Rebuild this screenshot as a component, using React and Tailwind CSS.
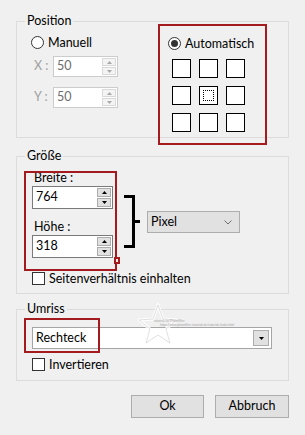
import React from "react";

const font = { fontFamily: '"Segoe UI", Lato, "Noto Sans", "Liberation Sans", sans-serif' };

function Arrow({ up, color }) {
  return (
    <svg width="5" height="3" viewBox="0 0 5 3">
      <path d={up ? "M0 3 L2.5 0 L5 3 Z" : "M0 0 L5 0 L2.5 3 Z"} fill={color} />
    </svg>
  );
}

function SpinBox({ value, width, height, disabled }) {
  return (
    <div
      className={`flex items-stretch bg-white border ${
        disabled ? "border-[#cccccc]" : "border-[#7a7a7a]"
      }`}
      style={{ width, height }}
    >
      <div
        className={`flex-1 pl-[3px] flex items-center text-[12.5px] ${
          disabled ? "text-[#6d6d6d]" : "text-black"
        }`}
      >
        {value}
      </div>
      <div className="flex flex-col gap-px py-px pr-px w-[15px]">
        {[true, false].map((up) => (
          <div
            key={up ? "u" : "d"}
            className={`flex-1 flex items-center justify-center border ${
              disabled
                ? "border-[#d9d9d9] bg-[#f4f4f4]"
                : "border-[#adadad] bg-[#e1e1e1]"
            }`}
          >
            <Arrow up={up} color={disabled ? "#a8a8a8" : "#000"} />
          </div>
        ))}
      </div>
    </div>
  );
}

function Radio({ checked, label }) {
  return (
    <div className="flex items-center h-[13px]">
      <div className="w-[13px] h-[13px] rounded-full border border-[#333333] bg-white flex items-center justify-center">
        {checked && <div className="w-[7px] h-[7px] rounded-full bg-[#333333]" />}
      </div>
      <span className="ml-[4px] text-[12.5px] leading-[16px] text-black">{label}</span>
    </div>
  );
}

function Check({ label }) {
  return (
    <div className="flex items-center h-[13px]">
      <div className="w-[13px] h-[13px] border border-[#333333] bg-white" />
      <span className="ml-[4px] text-[12.5px] leading-[16px] text-black">{label}</span>
    </div>
  );
}

function GroupLabel({ children }) {
  return (
    <div className="-mt-[9px] ml-[8px] w-fit px-[2px] bg-[#f0f0f0] text-[12.5px] leading-[16px] text-black">
      {children}
    </div>
  );
}

export default function App() {
  const cells = [0, 1, 2, 3, 4, 5, 6, 7, 8];

  return (
    <div className="relative w-[305px] h-[435px] bg-[#f0f0f0] overflow-hidden pt-[21px]" style={font}>
      {/* POSITION */}
      <div className="ml-[16px] w-[273px] h-[117px] border border-[#dcdcdc]">
        <GroupLabel>Position</GroupLabel>
        <div className="flex mt-[7px]">
          <div className="w-[151px] pl-[14px]">
            <Radio label="Manuell" />
            <div className="flex items-center mt-[7px]">
              <span className="ml-[3px] w-[19px] text-[12.5px] text-[#a0a0a0]">X :</span>
              <SpinBox value="50" width={65} height={21} disabled />
            </div>
            <div className="flex items-center mt-[10px]">
              <span className="ml-[3px] w-[19px] text-[12.5px] text-[#a0a0a0]">Y :</span>
              <SpinBox value="50" width={65} height={21} disabled />
            </div>
          </div>
          <div className="mt-[1px]">
            <Radio checked label="Automatisch" />
            <div className="ml-[4px] mt-[9px] grid grid-cols-3 gap-[8px] w-fit">
              {cells.map((i) => (
                <div
                  key={i}
                  className="w-[19px] h-[19px] border border-black bg-white flex items-center justify-center"
                >
                  {i === 4 && (
                    <div className="w-[11px] h-[11px] border border-dotted border-black" />
                  )}
                </div>
              ))}
            </div>
          </div>
        </div>
      </div>

      {/* GRÖSSE */}
      <div className="ml-[16px] mt-[18px] w-[273px] h-[138px] border border-[#dcdcdc]">
        <GroupLabel>Größe</GroupLabel>
        <div className="flex pl-[15px] mt-[6px]">
          <div>
            <div className="ml-[2px] text-[12.5px] leading-[16px] text-black">Breite :</div>
            <SpinBox value="764" width={81} height={23} />
            <div className="ml-[2px] mt-[10px] text-[12.5px] leading-[16px] text-black">Höhe :</div>
            <SpinBox value="318" width={81} height={23} />
          </div>
          <svg className="ml-[11px] mt-[25px]" width="17" height="53" viewBox="0 0 17 53">
            <path d="M0 1.5 H9.5 V51.5 H0 M9.5 26.5 H16" fill="none" stroke="#000" strokeWidth="3" />
          </svg>
          <div className="ml-[6px] mt-[41px] w-[93px] h-[22px] bg-[#e1e1e1] border border-[#adadad] flex items-center justify-between pl-[3px] pr-[7px] text-[12.5px] text-black">
            <span>Pixel</span>
            <svg width="8" height="5" viewBox="0 0 8 5">
              <path d="M0.5 0.5 L4 4 L7.5 0.5" fill="none" stroke="#707070" strokeWidth="1" />
            </svg>
          </div>
        </div>
        <div className="pl-[15px] mt-[14px]">
          <Check label="Seitenverhältnis einhalten" />
        </div>
      </div>

      {/* UMRISS */}
      <div className="ml-[16px] mt-[15px] w-[273px] h-[72px] border border-[#dcdcdc]">
        <GroupLabel>Umriss</GroupLabel>
        <div className="pl-[15px] mt-[10px]">
          <div className="w-[240px] h-[22px] bg-white border border-[#a5a5a5] flex items-center justify-between pl-[3px] pr-[2px] text-[12.5px] text-black">
            <span>Rechteck</span>
            <div className="w-[16px] h-[16px] bg-[#e1e1e1] border border-[#adadad] flex items-center justify-center">
              <Arrow color="#000" />
            </div>
          </div>
          <div className="mt-[9px]">
            <Check label="Invertieren" />
          </div>
        </div>
      </div>

      {/* BUTTONS */}
      <div className="flex justify-end gap-[11px] pr-[16px] mt-[14px]">
        <button className="w-[73px] h-[23px] bg-[#e1e1e1] border border-[#adadad] text-[12.5px] text-black">
          Ok
        </button>
        <button className="w-[74px] h-[23px] bg-[#e1e1e1] border border-[#adadad] text-[12.5px] text-black">
          Abbruch
        </button>
      </div>

      {/* WATERMARK */}
      <div className="absolute left-[138px] top-[303px] pointer-events-none opacity-90">
        <svg width="40" height="42" viewBox="0 0 40 42">
          <path
            d="M20 2 L25 16 L39 17 L28 26 L32 40 L20 32 L8 40 L12 26 L1 17 L15 16 Z"
            fill="none"
            stroke="#ffffff"
            strokeWidth="3"
          />
          <path
            d="M20 2 L25 16 L39 17 L28 26 L32 40 L20 32 L8 40 L12 26 L1 17 L15 16 Z"
            fill="none"
            stroke="#c8c8c8"
            strokeWidth="0.6"
          />
        </svg>
        <div className="absolute left-[16px] top-[16px] text-[3px] leading-[4px] text-[#9a9a9a] whitespace-nowrap">
          <div>tutorials for PhotoFiltre</div>
          <div className="ml-[6px]">https://www.photofiltre-tutorials.de/tutorials/index.html</div>
        </div>
      </div>

      {/* RED HIGHLIGHTS */}
      <div className="absolute left-[158px] top-[24px] w-[109px] h-[121px] border-2 border-[#a31b1f]" />
      <div className="absolute left-[24px] top-[171px] w-[93px] h-[100px] border-2 border-[#a31b1f]" />
      <div className="absolute left-[114px] top-[257px] w-[6px] h-[7px] border-2 border-[#a31b1f] bg-[#f7e8e8]" />
      <div className="absolute left-[24px] top-[318px] w-[76px] h-[35px] border-2 border-[#a31b1f]" />
    </div>
  );
}
